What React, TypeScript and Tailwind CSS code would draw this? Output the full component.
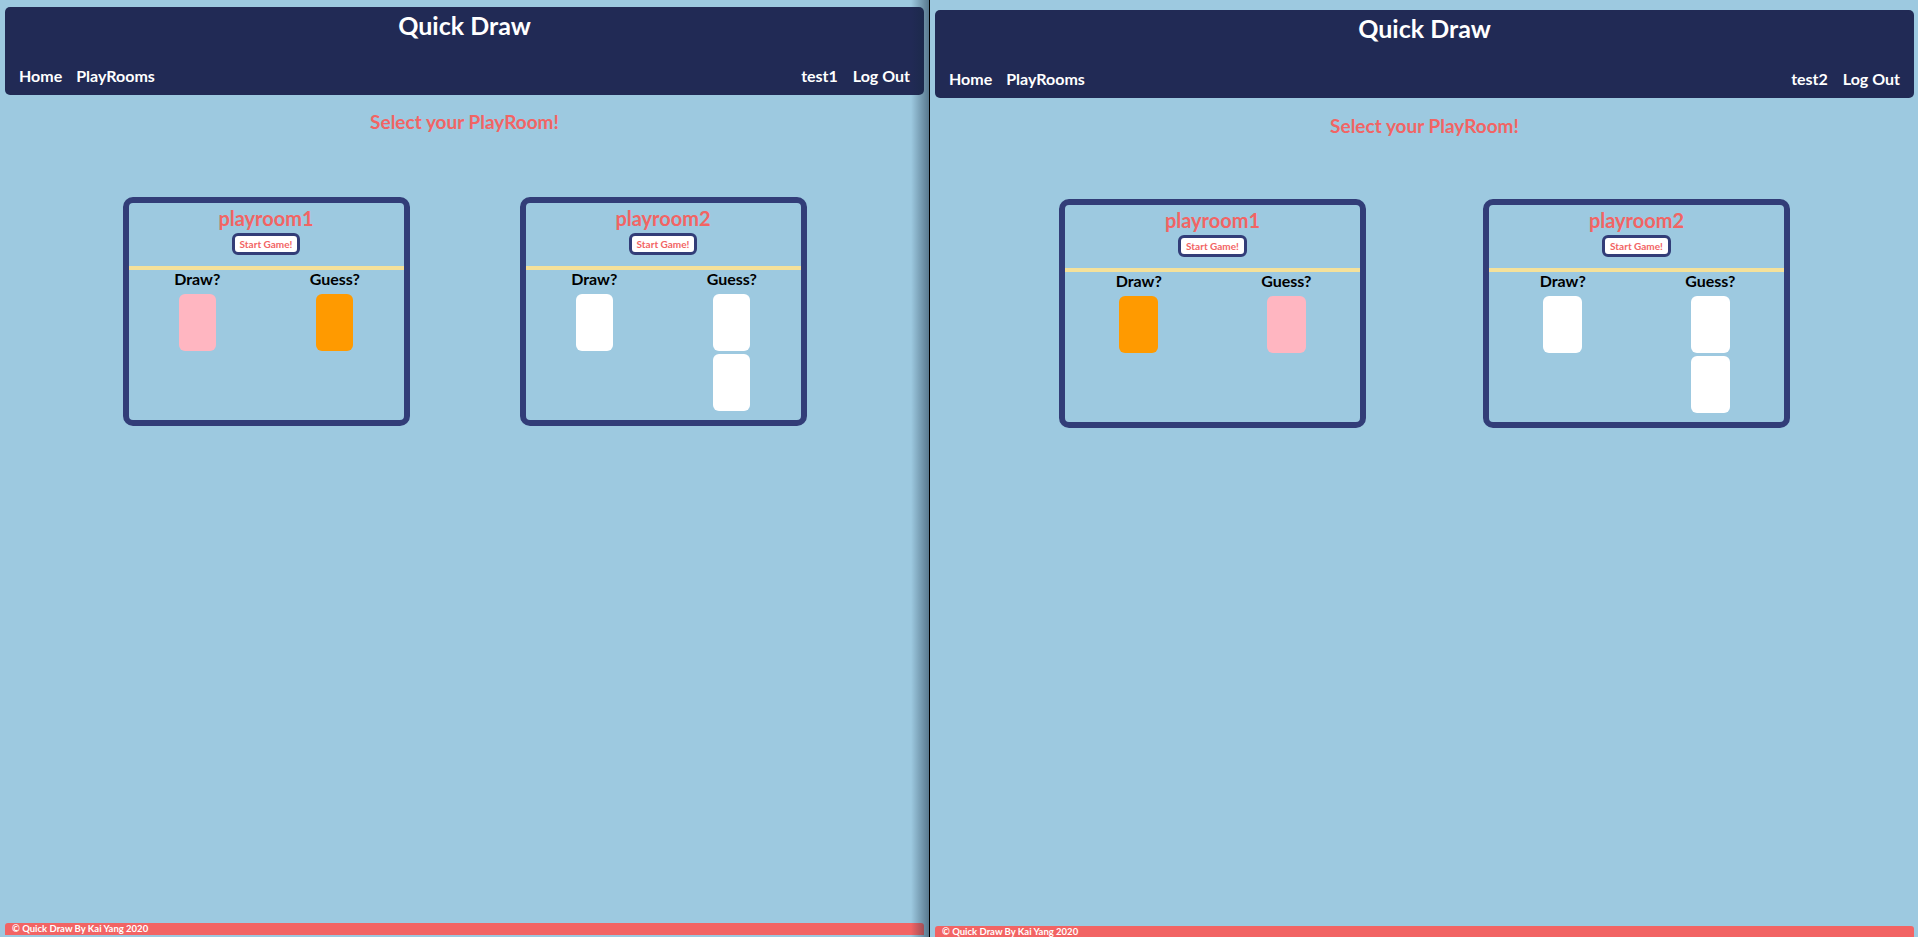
import React from 'react';

type Slot = 'pink' | 'orange' | 'empty';

type Room = {
  name: string;
  draw: Slot[];
  guess: Slot[];
};

const slotColor: Record<Slot, string> = {
  pink: 'bg-[#ffb6c1]',
  orange: 'bg-[#ff9a00]',
  empty: 'bg-white',
};

const font = { fontFamily: 'Lato, "Open Sans", sans-serif' };

const PlayerBox = ({ slot, wide }: { slot: Slot; wide: boolean }) => (
  <div className={`${wide ? 'w-[39px]' : 'w-[37px]'} h-[57px] rounded-[6px] ${slotColor[slot]}`} />
);

const RoomCard = ({ room, wide }: { room: Room; wide: boolean }) => (
  <div
    className={`${wide ? 'w-[307px]' : 'w-[287px]'} h-[229px] border-[6px] border-[#323d78] rounded-[10px] flex flex-col`}
  >
    <div className="pt-[3px] text-center text-[20px] leading-[24px] font-bold text-[#f26464]">{room.name}</div>
    <div className="mt-[3px] flex justify-center">
      <button className="h-[22px] px-[5px] border-[3px] border-[#323d78] rounded-[6px] bg-white text-[10px] leading-none font-bold text-[#f26464]">
        Start Game!
      </button>
    </div>
    <div className="mt-[11px] h-[4px] bg-[#f5e19a]" />
    <div className="grid grid-cols-2">
      <div className="flex flex-col items-center">
        <div className="text-[16px] leading-[18px] font-bold text-black">Draw?</div>
        <div className="mt-[6px] flex flex-col gap-[3px]">
          {room.draw.map((s, i) => (
            <PlayerBox key={i} slot={s} wide={wide} />
          ))}
        </div>
      </div>
      <div className="flex flex-col items-center">
        <div className="text-[16px] leading-[18px] font-bold text-black">Guess?</div>
        <div className="mt-[6px] flex flex-col gap-[3px]">
          {room.guess.map((s, i) => (
            <PlayerBox key={i} slot={s} wide={wide} />
          ))}
        </div>
      </div>
    </div>
  </div>
);

const BrowserWindow = ({ user, rooms, wide }: { user: string; rooms: Room[]; wide: boolean }) => (
  <div
    className={`relative h-[937px] flex flex-col shrink-0 ${
      wide ? 'w-[988px] pt-[10px] pl-[5px] pr-[4px]' : 'w-[929px] pt-[7px] px-[5px] pb-[2px]'
    }`}
  >
    {/* Navbar */}
    <nav className="h-[88px] rounded-[5px] bg-[#212a55] flex flex-col justify-between px-[14px] pt-[2px] pb-[9px] text-white">
      <div className="text-center text-[25px] leading-[32px] font-bold">Quick Draw</div>
      <div className="flex items-end justify-between text-[16px] leading-[20px] font-bold">
        <div className="flex gap-[14px]">
          <a>Home</a>
          <a>PlayRooms</a>
        </div>
        <div className="flex gap-[15px]">
          <a>{user}</a>
          <a>Log Out</a>
        </div>
      </div>
    </nav>

    <main className="flex-1 flex flex-col">
      <h2
        className={`${wide ? 'mt-[16px]' : 'mt-[15px]'} text-center text-[19px] leading-[24px] font-bold text-[#f26464]`}
      >
        Select your PlayRoom!
      </h2>
      <div className={`${wide ? 'mt-[61px] gap-[117px]' : 'mt-[63px] gap-[110px]'} flex justify-center`}>
        {rooms.map((r) => (
          <RoomCard key={r.name} room={r} wide={wide} />
        ))}
      </div>
    </main>

    {/* Footer */}
    <footer
      className={`${wide ? 'h-[11px]' : 'h-[12px]'} rounded-t-[3px] bg-[#f26464] pl-[7px] text-[9.5px] leading-[12px] font-bold text-white`}
    >
      © Quick Draw By Kai Yang 2020
    </footer>

    {!wide && (
      <div className="pointer-events-none absolute right-0 top-0 h-full w-[18px] bg-linear-to-r from-transparent to-[rgba(20,40,60,0.5)]" />
    )}
  </div>
);

export default function App() {
  const rooms1: Room[] = [
    { name: 'playroom1', draw: ['pink'], guess: ['orange'] },
    { name: 'playroom2', draw: ['empty'], guess: ['empty', 'empty'] },
  ];
  const rooms2: Room[] = [
    { name: 'playroom1', draw: ['orange'], guess: ['pink'] },
    { name: 'playroom2', draw: ['empty'], guess: ['empty', 'empty'] },
  ];

  return (
    <div className="flex h-[937px] w-[1918px] overflow-hidden bg-[#9dc9e0]" style={font}>
      <BrowserWindow user="test1" rooms={rooms1} wide={false} />
      <div className="w-px h-full bg-black shrink-0" />
      <BrowserWindow user="test2" rooms={rooms2} wide={true} />
    </div>
  );
}
